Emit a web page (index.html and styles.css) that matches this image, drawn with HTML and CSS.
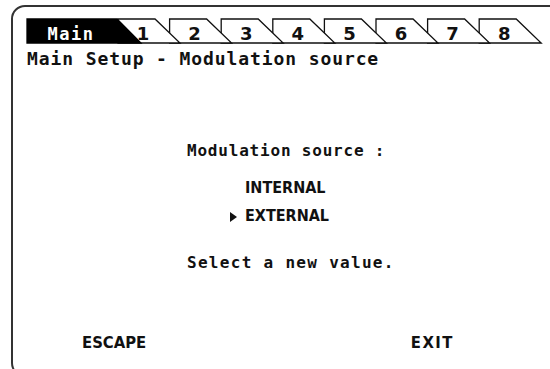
FILE: index.html
```html
<!DOCTYPE html>
<html lang="en">

<head>
    <meta charset="UTF-8">
    <meta name="viewport" content="width=device-width, initial-scale=1.0">
    <title>Main Setup - Modulation source</title>
    <link rel="stylesheet" href="styles.css">
</head>

<body>
    <div class="screen">
        <!-- Tab strip: later tabs are drawn first so earlier ones lie on top -->
        <svg class="tabs" width="548" height="37" viewBox="0 0 548 37">
            <g class="tab">
                <polygon points="466.2,36 466.2,12 503.2,12 528.2,36" />
                <text x="491.2" y="32.5">8</text>
            </g>
            <g class="tab">
                <polygon points="414.6,36 414.6,12 451.6,12 476.6,36" />
                <text x="439.6" y="32.5">7</text>
            </g>
            <g class="tab">
                <polygon points="363,36 363,12 400,12 425,36" />
                <text x="388" y="32.5">6</text>
            </g>
            <g class="tab">
                <polygon points="311.4,36 311.4,12 348.4,12 373.4,36" />
                <text x="336.4" y="32.5">5</text>
            </g>
            <g class="tab">
                <polygon points="259.8,36 259.8,12 296.8,12 321.8,36" />
                <text x="284.8" y="32.5">4</text>
            </g>
            <g class="tab">
                <polygon points="208.2,36 208.2,12 245.2,12 270.2,36" />
                <text x="233.2" y="32.5">3</text>
            </g>
            <g class="tab">
                <polygon points="156.6,36 156.6,12 193.6,12 218.6,36" />
                <text x="181.6" y="32.5">2</text>
            </g>
            <g class="tab">
                <polygon points="105,36 105,12 142,12 167,36" />
                <text x="130" y="32.5">1</text>
            </g>
            <g class="tab active">
                <polygon points="14,36 14,12 104,12 128,36" />
                <text x="58" y="32.5">Main</text>
            </g>
        </svg>

        <h1 class="title">Main Setup - Modulation source</h1>

        <div class="body">
            <p class="question">Modulation source :</p>

            <ul class="options">
                <li>INTERNAL</li>
                <li class="selected">EXTERNAL</li>
            </ul>

            <p class="hint">Select a new value.</p>
        </div>

        <div class="softkeys">
            <span class="key">ESCAPE</span>
            <span class="key key-right">EXIT</span>
        </div>
    </div>
</body>

</html>
```

FILE: styles.css
```css
body {
    margin: 0;
    background: #fff;
    color: #111;
    overflow: hidden;
    font-family: "DejaVu Sans Mono", monospace;
}

.screen {
    margin: 5px 0 0 11px;
    width: 548px;
    height: 368px;
    border: 2px solid #333;
    border-radius: 14px;
}

.tabs {
    display: block;
}

.tab polygon {
    fill: #fff;
    stroke: #111;
    stroke-width: 1.3;
}

.tab text {
    font-family: "DejaVu Sans", sans-serif;
    font-weight: bold;
    font-size: 18px;
    text-anchor: middle;
    fill: #111;
}

.tab.active polygon {
    fill: #000;
    stroke: #000;
}

.tab.active text {
    font-family: "DejaVu Sans Mono", monospace;
    font-size: 17px;
    letter-spacing: 1.5px;
    fill: #fff;
}

.title {
    margin: 4px 0 0 14px;
    font-size: 18px;
    line-height: 22px;
    letter-spacing: 0.9px;
    font-weight: bold;
}

.body {
    padding-left: 174px;
    font-weight: bold;
}

.question {
    margin: 71px 0 0;
    font-size: 16px;
    line-height: 20px;
    letter-spacing: 0.8px;
}

.options {
    list-style: none;
    margin: 13px 0 0 58px;
    padding: 0;
    font-family: "DejaVu Sans Condensed", "DejaVu Sans", sans-serif;
    font-stretch: condensed;
    font-size: 16px;
    line-height: 28px;
}

.options li {
    position: relative;
}

.options .selected::before {
    content: "";
    position: absolute;
    left: -15px;
    top: 10px;
    border-left: 7px solid #111;
    border-top: 5px solid transparent;
    border-bottom: 5px solid transparent;
}

.hint {
    margin: 23px 0 0;
    font-size: 16px;
    line-height: 20px;
    letter-spacing: 1.3px;
}

.softkeys {
    display: flex;
    margin-top: 60px;
    padding: 0 107px 0 69px;
    font-family: "DejaVu Sans Condensed", "DejaVu Sans", sans-serif;
    font-stretch: condensed;
    font-weight: bold;
    font-size: 16.5px;
    line-height: 20px;
}

.key-right {
    margin-left: auto;
    letter-spacing: 1.5px;
}
```
